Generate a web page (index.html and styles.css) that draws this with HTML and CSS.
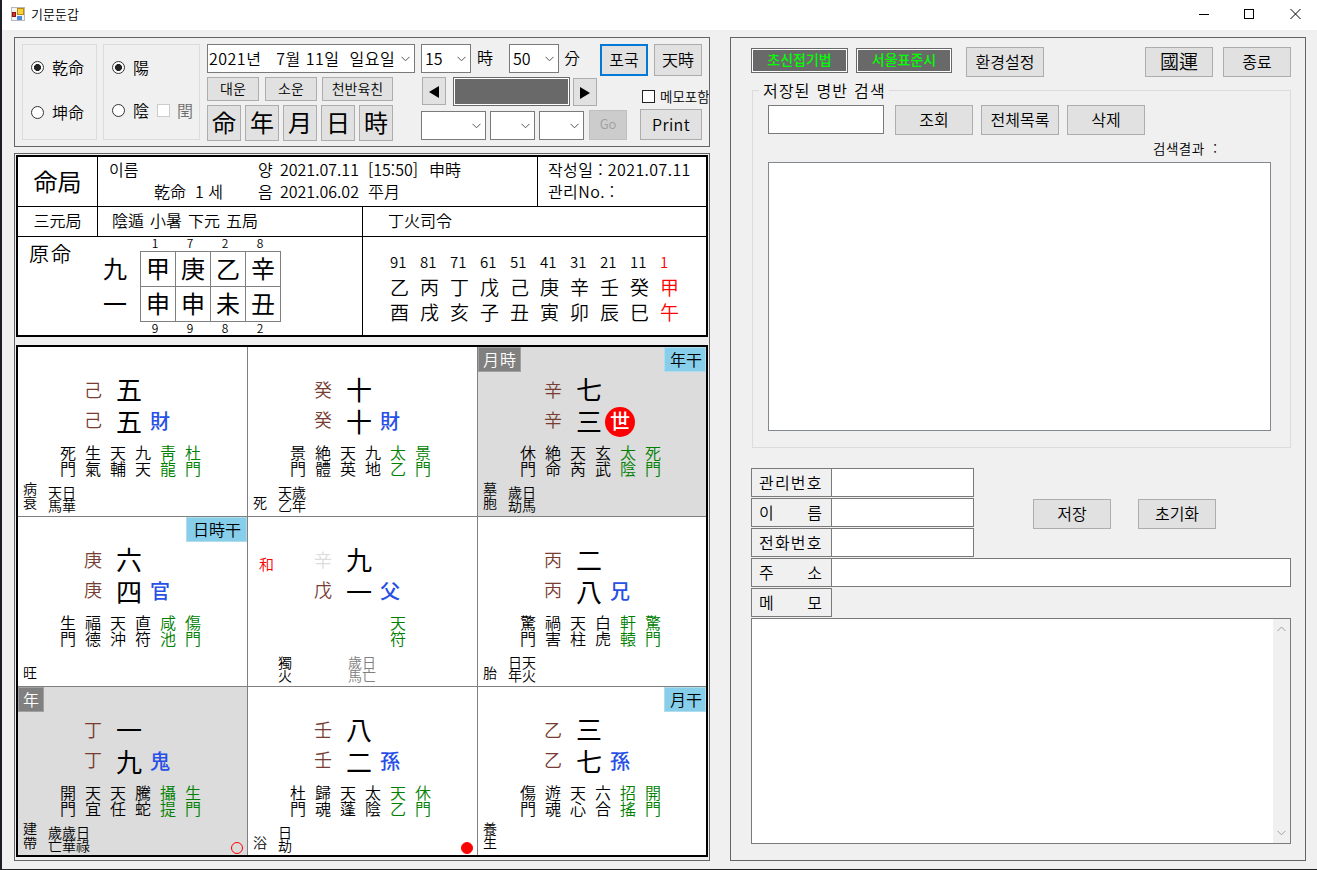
FILE: index.html
```html
<!DOCTYPE html>
<html lang="ko">
<head>
  <meta charset="UTF-8">
  <meta name="viewport" content="width=device-width, initial-scale=1.0">
  <title>기문둔갑</title>
  <link rel="stylesheet" href="styles.css">
</head>
<body>
  <div class="window">
    <!-- 제목 표시줄 -->
    <header class="titlebar">
      <svg class="app-icon" width="15" height="14" viewBox="0 0 15 14">
        <rect x="0.5" y="0.5" width="13" height="13" fill="#f4f4f4" stroke="#b8b8b8"/>
        <rect x="6.5" y="1.5" width="6" height="6" fill="#fccf3c" stroke="#b98b0b"/>
        <rect x="1.5" y="5.5" width="3" height="4" fill="#d43a2a" stroke="#8e130a"/>
        <rect x="6" y="9" width="5" height="4" fill="#4f8be0"/>
      </svg>
      <span class="app-name">기문둔갑</span>
      <svg class="win-buttons" width="103" height="12" viewBox="0 0 103 12" fill="none" stroke="#000">
        <path d="M0 6.5h10"/>
        <rect x="45.5" y="1.5" width="9" height="9"/>
        <path d="M91.5 1l10 10M101.5 1l-10 10"/>
      </svg>
    </header>

    <main>
      <div class="left">
        <!-- 입력 도구 -->
        <section class="tools">
          <div class="group gender">
            <label><i class="radio on"></i>乾命</label>
            <label><i class="radio"></i>坤命</label>
          </div>
          <div class="group calendar">
            <label><i class="radio on"></i>陽</label>
            <label><i class="radio"></i>陰 <i class="check off"></i><span class="leap">閏</span></label>
          </div>
          <div class="date-col">
            <div class="combo date"><span>2021년 &nbsp; 7월 11일 &nbsp;일요일</span><svg width="9" height="6" viewBox="0 0 9 6"><path d="M.5.8l4 4 4-4"/></svg></div>
            <div class="luck">
              <button>대운</button><button>소운</button><button class="wide">천반육친</button>
            </div>
            <div class="pillars-btn">
              <button>命</button><button>年</button><button>月</button><button>日</button><button>時</button>
            </div>
          </div>
          <div class="time-col">
            <div class="time">
              <div class="combo"><span>15</span><svg width="9" height="6" viewBox="0 0 9 6"><path d="M.5.8l4 4 4-4"/></svg></div>
              <span class="unit hour">時</span>
              <div class="combo"><span>50</span><svg width="9" height="6" viewBox="0 0 9 6"><path d="M.5.8l4 4 4-4"/></svg></div>
              <span class="unit">分</span>
            </div>
            <div class="stepper">
              <button><svg width="10" height="12" viewBox="0 0 10 12"><path d="M10 0v12L0 6z"/></svg></button>
              <div class="dark"></div>
              <button><svg width="10" height="12" viewBox="0 0 10 12"><path d="M0 0v12l10-6z"/></svg></button>
            </div>
            <div class="find">
              <div class="combo year"><svg width="9" height="6" viewBox="0 0 9 6"><path d="M.5.8l4 4 4-4"/></svg></div>
              <div class="combo"><svg width="9" height="6" viewBox="0 0 9 6"><path d="M.5.8l4 4 4-4"/></svg></div>
              <div class="combo"><svg width="9" height="6" viewBox="0 0 9 6"><path d="M.5.8l4 4 4-4"/></svg></div>
              <button disabled>Go</button>
            </div>
          </div>
          <div class="run-col">
            <div class="run"><button class="primary">포국</button><button>天時</button></div>
            <label class="memo-check"><i class="check"></i>메모포함</label>
            <button class="print">Print</button>
          </div>
        </section>

        <section class="board">
          <!-- 명국 정보 -->
          <div class="info">
            <div class="row row-name">
              <div class="name-title">命局</div>
              <div class="person">
                <span>이름</span><span>양</span><span>2021.07.11</span><span>[15:50]</span><span>申時</span>
                <span class="sex">乾命&nbsp; 1 세</span><span>음</span><span>2021.06.02</span><span>平月</span>
              </div>
              <div class="written">작성일 : 2021.07.11<br>관리No. :</div>
            </div>
            <div class="row row-guk">
              <div class="guk-title">三元局</div>
              <div class="guk"><span>陰遁</span><span>小暑</span><span>下元</span><span>五局</span></div>
              <div class="ruler">丁火司令</div>
            </div>
            <div class="row row-life">
              <div class="life">
                <div class="life-title">原命</div>
                <div class="total"><span>九</span><span>一</span></div>
                <div class="pillars">
                  <div class="nums"><span>1</span><span>7</span><span>2</span><span>8</span></div>
                  <div class="stems">
                    <span>甲</span><span>庚</span><span>乙</span><span>辛</span>
                    <span>申</span><span>申</span><span>未</span><span>丑</span>
                  </div>
                  <div class="nums"><span>9</span><span>9</span><span>8</span><span>2</span></div>
                </div>
              </div>
              <div class="decades">
                <span>91</span><span>81</span><span>71</span><span>61</span><span>51</span><span>41</span><span>31</span><span>21</span><span>11</span><span class="now">1</span>
                <span>乙</span><span>丙</span><span>丁</span><span>戊</span><span>己</span><span>庚</span><span>辛</span><span>壬</span><span>癸</span><span class="now">甲</span>
                <span>酉</span><span>戌</span><span>亥</span><span>子</span><span>丑</span><span>寅</span><span>卯</span><span>辰</span><span>巳</span><span class="now">午</span>
              </div>
            </div>
          </div>

          <!-- 구궁 -->
          <div class="palaces">
            <div class="palace">
              <div class="core"><div class="gan"><span>己</span><span>己</span></div><div class="su"><span>五</span><span>五</span></div><b class="kin">財</b></div>
              <div class="gods"><span>死門</span><span>生氣</span><span>天輔</span><span>九天</span><span class="g">靑龍</span><span class="g">杜門</span></div>
              <div class="foot"><span class="phase">病衰</span><span class="sal">天日馬華</span></div>
            </div>
            <div class="palace">
              <div class="core"><div class="gan"><span>癸</span><span>癸</span></div><div class="su"><span>十</span><span>十</span></div><b class="kin">財</b></div>
              <div class="gods"><span>景門</span><span>絶體</span><span>天英</span><span>九地</span><span class="g">太乙</span><span class="g">景門</span></div>
              <div class="foot"><span class="phase">死</span><span class="sal">天歲乙年</span></div>
            </div>
            <div class="palace shade">
              <span class="tag left-tag">月時</span><span class="tag right-tag">年干</span>
              <div class="core"><div class="gan"><span>辛</span><span>辛</span></div><div class="su"><span>七</span><span>三</span></div><b class="self">世</b></div>
              <div class="gods"><span>休門</span><span>絶命</span><span>天芮</span><span>玄武</span><span class="g">太陰</span><span class="g">死門</span></div>
              <div class="foot"><span class="phase">墓胞</span><span class="sal">歲日劫馬</span></div>
            </div>
            <div class="palace">
              <span class="tag right-tag three-tag">日時干</span>
              <div class="core"><div class="gan"><span>庚</span><span>庚</span></div><div class="su"><span>六</span><span>四</span></div><b class="kin">官</b></div>
              <div class="gods"><span>生門</span><span>福德</span><span>天沖</span><span>直符</span><span class="g">咸池</span><span class="g">傷門</span></div>
              <div class="foot"><span class="phase">旺</span></div>
            </div>
            <div class="palace center">
              <span class="harmony">和</span>
              <div class="core"><div class="gan"><span class="faint">辛</span><span>戊</span></div><div class="su"><span>九</span><span>一</span></div><b class="kin">父</b></div>
              <div class="gods"><span></span><span></span><span></span><span></span><span class="g">天符</span><span></span></div>
              <div class="foot"><span class="phase"></span><span class="sal one">獨火</span><span class="sal gray">歲日馬亡</span></div>
            </div>
            <div class="palace">
              <div class="core"><div class="gan"><span>丙</span><span>丙</span></div><div class="su"><span>二</span><span>八</span></div><b class="kin">兄</b></div>
              <div class="gods"><span>驚門</span><span>禍害</span><span>天柱</span><span>白虎</span><span class="g">軒轅</span><span class="g">驚門</span></div>
              <div class="foot"><span class="phase">胎</span><span class="sal">日天年火</span></div>
            </div>
            <div class="palace shade">
              <span class="tag left-tag">年</span>
              <div class="core"><div class="gan"><span>丁</span><span>丁</span></div><div class="su"><span>一</span><span>九</span></div><b class="kin">鬼</b></div>
              <div class="gods"><span>開門</span><span>天宜</span><span>天任</span><span>騰蛇</span><span class="g">攝提</span><span class="g">生門</span></div>
              <div class="foot"><span class="phase">建帶</span><span class="sal three">歲歲日亡華祿</span></div>
              <i class="dot hollow"></i>
            </div>
            <div class="palace">
              <div class="core"><div class="gan"><span>壬</span><span>壬</span></div><div class="su"><span>八</span><span>二</span></div><b class="kin">孫</b></div>
              <div class="gods"><span>杜門</span><span>歸魂</span><span>天蓬</span><span>太陰</span><span class="g">天乙</span><span class="g">休門</span></div>
              <div class="foot"><span class="phase">浴</span><span class="sal one">日劫</span></div>
              <i class="dot"></i>
            </div>
            <div class="palace">
              <span class="tag right-tag">月干</span>
              <div class="core"><div class="gan"><span>乙</span><span>乙</span></div><div class="su"><span>三</span><span>七</span></div><b class="kin">孫</b></div>
              <div class="gods"><span>傷門</span><span>遊魂</span><span>天心</span><span>六合</span><span class="g">招搖</span><span class="g">開門</span></div>
              <div class="foot"><span class="phase">養生</span></div>
            </div>
          </div>
        </section>
      </div>

      <!-- 저장 / 검색 -->
      <section class="right">
        <div class="top">
          <div class="dark mode">초신접기법</div>
          <div class="dark mode std">서울표준시</div>
          <button class="setup">환경설정</button>
          <button class="nation">國運</button>
          <button class="quit">종료</button>
        </div>
        <fieldset>
          <legend>저장된 명반 검색</legend>
          <div class="search">
            <input type="text">
            <button>조회</button><button>전체목록</button><button>삭제</button>
          </div>
          <div class="result">검색결과 &nbsp;:</div>
          <div class="list"></div>
        </fieldset>
        <div class="form-top">
          <div class="fields">
            <div class="field"><label class="full">관리번호</label><input type="text"></div>
            <div class="field"><label><span>이</span><span>름</span></label><input type="text"></div>
            <div class="field"><label class="full">전화번호</label><input type="text"></div>
          </div>
          <div class="save"><button>저장</button><button>초기화</button></div>
        </div>
        <div class="field address"><label><span>주</span><span>소</span></label><input type="text"></div>
        <div class="field"><label><span>메</span><span>모</span></label></div>
        <div class="memo">
          <div class="scroll">
            <svg width="9" height="6" viewBox="0 0 9 6"><path d="M.5 5l4-4 4 4"/></svg>
            <svg width="9" height="6" viewBox="0 0 9 6"><path d="M.5.8l4 4 4-4"/></svg>
          </div>
        </div>
      </section>
    </main>
  </div>
</body>
</html>
```
FILE: styles.css
```css
* {
  box-sizing: border-box;
}
body {
  margin: 0;
  font-family: "Noto Sans CJK KR", sans-serif;
  font-size: 16px;
  font-weight: 350;
  color: #000;
  background-color: #f0f0f0;
}
i, b {
  font-style: normal;
}
.window {
  width: 1317px;
  height: 870px;
  border-left: 2px solid #1c1f26;
  border-bottom: 1px solid #222;
  overflow: hidden;
}
.titlebar {
  height: 30px;
  display: flex;
  align-items: center;
  padding: 0 15px 2px 9px;
  background-color: #fff;
}
.app-name {
  margin-left: 5px;
  font-size: 13px;
  line-height: 20px;
}
.win-buttons {
  margin-left: auto;
}
main {
  display: flex;
  gap: 20px;
  padding: 7px 0 0 12px;
}
button {
  display: flex;
  align-items: center;
  justify-content: center;
  padding: 0 0 2px;
  border: 1px solid #adadad;
  background-color: #e1e1e1;
  color: #000;
  font-family: inherit;
  font-size: 16px;
  font-weight: inherit;
  line-height: 20px;
  white-space: nowrap;
}
button:disabled {
  border-color: #bfbfbf;
  background-color: #ccc;
  color: #a0a0a0;
}
input {
  height: 29px;
  padding: 0 4px;
  border: 1px solid #7a7a7a;
  background-color: #fff;
}

/* 입력 도구 */
.left {
  width: 696px;
}
.tools {
  height: 110px;
  display: flex;
  padding: 6px 0 0 7px;
  border: 1px solid #646464;
}
.group {
  height: 96px;
  border: 1px solid #dcdcdc;
  padding-left: 8px;
}
.group label {
  display: flex;
  align-items: center;
  height: 20px;
}
.gender {
  width: 75px;
}
.gender label:first-child, .calendar label:first-child {
  margin-top: 12px;
}
.gender label + label {
  margin-top: 25px;
}
.calendar {
  width: 97px;
  margin-left: 6px;
}
.calendar label + label {
  margin-top: 23px;
}
.radio {
  flex: none;
  width: 13px;
  height: 13px;
  margin-right: 8px;
  border: 1px solid #333;
  border-radius: 50%;
  background-color: #fff;
}
.radio.on {
  background-image: radial-gradient(circle, #222 3.2px, transparent 3.8px);
}
.check {
  flex: none;
  width: 13px;
  height: 13px;
  border: 1px solid #222;
  background-color: #fff;
}
.check.off {
  margin-left: 8px;
  border-color: #ccc;
}
.leap {
  margin-left: 7px;
  color: #6d6d6d;
}
.date-col {
  width: 208px;
  margin-left: 7px;
}
.combo {
  height: 29px;
  width: 50px;
  display: flex;
  align-items: center;
  padding: 0 4px 0 3px;
  border: 1px solid #7a7a7a;
  background-color: #fff;
  line-height: 20px;
  white-space: nowrap;
}
.combo span {
  padding-bottom: 2px;
}
.combo svg {
  flex: none;
  margin-left: auto;
}
.combo path, .scroll path {
  fill: none;
  stroke: #555;
}
.combo.date {
  width: 208px;
  padding-left: 1px;
  letter-spacing: 0.5px;
}
.luck {
  display: flex;
  gap: 6px;
  margin-top: 4px;
}
.luck button {
  width: 52px;
  height: 24px;
  font-size: 14px;
}
.luck .wide {
  width: 71px;
  margin-left: -1px;
}
.pillars-btn {
  display: flex;
  gap: 4px;
  margin-top: 4px;
}
.pillars-btn button {
  width: 34px;
  height: 36px;
  font-size: 24px;
  font-weight: 400;
}
.time-col {
  width: 206px;
  margin-left: 6px;
}
.time {
  display: flex;
  height: 29px;
}
.unit {
  line-height: 26px;
  margin-left: 5px;
}
.unit.hour {
  width: 32px;
  margin-left: 6px;
}
.stepper {
  display: flex;
  align-items: flex-start;
  margin: 4px 0 0 1px;
}
.stepper button {
  width: 24px;
  height: 28px;
  padding: 2px 0 0;
}
.stepper button:last-child {
  margin: 1px 0 0 3px;
}
.stepper .dark {
  width: 117px;
  height: 29px;
  margin-left: 7px;
}
.dark {
  border: 1px solid #696969;
  background-color: #696969;
  box-shadow: inset 0 0 0 1px #fff;
}
.find {
  display: flex;
  gap: 4px;
  margin-top: 5px;
}
.find .combo {
  width: 45px;
}
.find .combo.year {
  width: 65px;
}
.find button {
  width: 38px;
  height: 30px;
  margin: -1px 0 0 1px;
  font-size: 13px;
}
.run-col {
  flex: 1;
  display: flex;
  flex-direction: column;
  align-items: flex-end;
  min-width: 0;
  margin-left: -27px;
  overflow: hidden;
}
.run {
  display: flex;
  gap: 6px;
  margin-right: 7px;
}
.run button {
  width: 48px;
  height: 32px;
}
.run .primary {
  border: 2px solid #0078d7;
}
.memo-check {
  display: flex;
  align-items: center;
  gap: 5px;
  width: 67px;
  height: 20px;
  margin-top: 10px;
  font-size: 13.5px;
  white-space: nowrap;
}
.print {
  width: 62px;
  height: 31px;
  margin: 3px 7px 0 0;
  letter-spacing: 0.4px;
}

/* 명국 정보 */
.board {
  height: 708px;
  margin-top: 6px;
  padding: 1px;
  border: 1px solid #646464;
}
.info {
  width: 692px;
  height: 182px;
  border: 2px solid #000;
  background-color: #fff;
}
.row {
  display: flex;
}
.row-name {
  height: 50px;
  border-bottom: 1px solid #000;
}
.name-title, .guk-title {
  width: 80px;
  border-right: 1px solid #000;
  text-align: center;
}
.name-title {
  font-size: 24px;
  font-weight: 400;
  line-height: 48px;
}
.person {
  width: 439px;
  display: grid;
  grid-template-columns: 149px 22px 88px 61px 60px;
  grid-template-rows: 22px 22px;
  padding: 1px 0 0 11px;
  line-height: 22px;
}
.sex {
  padding-left: 45px;
}
.written {
  flex: 1;
  padding: 1px 0 0 10px;
  border-left: 1px solid #000;
  line-height: 22px;
  letter-spacing: 0.4px;
  white-space: nowrap;
}
.row-guk {
  height: 30px;
  border-bottom: 1px solid #000;
  line-height: 27px;
}
.guk {
  width: 264px;
  display: flex;
  gap: 6px;
  padding-left: 14px;
}
.ruler {
  flex: 1;
  padding-left: 25px;
  border-left: 1px solid #000;
}
.row-life {
  height: 98px;
}
.life {
  width: 344px;
  display: flex;
  padding-left: 11px;
}
.life-title {
  width: 74px;
  font-size: 20px;
  line-height: 34px;
  letter-spacing: 2px;
}
.total {
  width: 37px;
  padding-top: 13px;
  font-size: 24px;
  font-weight: 400;
  line-height: 35px;
}
.total span {
  display: block;
}
.pillars .nums {
  display: flex;
  height: 14px;
  font-size: 12px;
  line-height: 12px;
}
.nums span {
  width: 35px;
  padding-right: 5px;
  text-align: center;
}
.stems {
  display: grid;
  grid-template-columns: repeat(4, 35px);
  grid-auto-rows: 35px;
  border: 1px solid #808080;
  border-width: 1px 0 0 1px;
  font-size: 24px;
  font-weight: 400;
  line-height: 32px;
  text-align: center;
}
.stems span {
  border: 1px solid #808080;
  border-width: 0 1px 1px 0;
}
.decades {
  flex: 1;
  display: grid;
  grid-template-columns: repeat(10, 30px);
  grid-auto-rows: 25px;
  align-content: start;
  padding: 12px 0 0 27px;
  border-left: 1px solid #000;
  font-size: 19px;
  line-height: 25px;
}
.decades span:nth-child(-n+10) {
  font-size: 15px;
}
.decades .now {
  color: #f00;
}

/* 구궁 */
.palaces {
  width: 692px;
  height: 512px;
  margin-top: 8px;
  display: grid;
  grid-template-columns: 230px 230px 228px;
  grid-template-rows: 170px 170px 168px;
  border: 2px solid #000;
  background-color: #fff;
}
.palace {
  position: relative;
  display: flex;
  flex-direction: column;
  border: 0 solid #808080;
  border-width: 0 1px 1px 0;
  padding-top: 26px;
}
.palace:nth-child(3n) {
  border-right: 0;
}
.palace:nth-child(n+7) {
  border-bottom: 0;
}
.shade {
  background-color: #dcdcdc;
}
.core {
  display: flex;
  height: 64px;
  padding-left: 66px;
}
.gan {
  width: 32px;
  padding-top: 1px;
  font-size: 18px;
  line-height: 30px;
  color: #783c32;
}
.su {
  width: 34px;
  font-size: 26px;
  font-weight: 400;
  line-height: 32px;
}
.gan span, .su span {
  display: block;
}
.gan .faint {
  color: #dcdcdc;
}
.kin {
  align-self: flex-end;
  font-size: 20px;
  font-weight: 500;
  line-height: 32px;
  color: #284fe6;
}
.self {
  align-self: flex-end;
  width: 30px;
  height: 30px;
  margin: 0 0 0 -5px;
  border-radius: 50%;
  background-color: #f00;
  color: #fff;
  font-size: 20px;
  font-weight: 500;
  line-height: 28px;
  text-align: center;
}
.gods {
  display: flex;
  gap: 9px;
  height: 32px;
  margin-top: 7px;
  padding-left: 42px;
  font-size: 16px;
  line-height: 16px;
}
.gods span {
  width: 16px;
}
.gods .g {
  color: #008000;
}
.foot {
  flex: none;
  display: flex;
  align-items: flex-end;
  height: 36px;
  padding-left: 5px;
  font-size: 14px;
}
.phase {
  width: 14px;
  margin: 0 11px 3px 0;
  line-height: 14px;
}
.sal {
  width: 28px;
  line-height: 13px;
}
.sal.one {
  width: 14px;
}
.sal.three {
  width: 42px;
}
.sal.gray {
  margin-left: 56px;
  color: #808080;
}
.tag {
  position: absolute;
  top: 0;
  height: 25px;
  font-size: 16px;
  line-height: 22px;
}
.left-tag {
  left: 0;
  padding: 0 3px 0 4px;
  border: 1px solid #a0a0a0;
  background-color: #808080;
  color: #fff;
  letter-spacing: 1px;
}
.right-tag {
  right: 0;
  padding: 0 3px 0 5px;
  border: 1px solid #b0dcee;
  background-color: #87ceeb;
}
.three-tag {
  padding: 0 5px 0 6px;
}
.harmony {
  position: absolute;
  left: 11px;
  top: 37px;
  font-size: 15px;
  line-height: 20px;
  color: #f00;
}
.dot {
  position: absolute;
  right: 4px;
  bottom: 1px;
  width: 12px;
  height: 12px;
  border: 1px solid #f00;
  border-radius: 50%;
  background-color: #f00;
}
.dot.hollow {
  background-color: transparent;
}

/* 저장 / 검색 */
.right {
  width: 576px;
  height: 824px;
  padding: 9px 14px 0 20px;
  border: 1px solid #646464;
}
.top {
  display: flex;
  height: 30px;
}
.mode {
  width: 97px;
  height: 25px;
  margin-top: 1px;
  font-size: 14px;
  font-weight: 500;
  line-height: 20px;
  text-align: center;
  color: #0f0;
}
.std {
  width: 96px;
  margin-left: 8px;
}
.setup {
  width: 78px;
  margin-left: 14px;
}
.nation {
  width: 68px;
  margin-left: auto;
  font-size: 19px;
}
.quit {
  width: 68px;
  margin-left: 10px;
}
fieldset {
  height: 368px;
  margin: 3px 0 0 1px;
  padding: 5px 19px 0 15px;
  border: 1px solid #dcdcdc;
}
legend {
  margin-left: -9px;
  padding: 0 3px 0 4px;
  line-height: 20px;
  letter-spacing: 1.2px;
  white-space: nowrap;
}
.search {
  display: flex;
}
.search input {
  width: 116px;
  margin-right: 3px;
}
.search button {
  width: 78px;
  height: 30px;
  margin-left: 8px;
}
.result {
  height: 27px;
  padding-left: 385px;
  font-size: 13.5px;
  line-height: 26px;
  letter-spacing: 0.5px;
}
.list {
  height: 269px;
  border: 1px solid #828790;
  background-color: #fff;
}
.form-top {
  display: flex;
  margin-top: 20px;
}
.field {
  display: flex;
  height: 30px;
}
.field label {
  display: flex;
  justify-content: space-between;
  width: 81px;
  height: 29px;
  padding: 0 9px 0 7px;
  border: 1px solid #7a7a7a;
  line-height: 26px;
  white-space: nowrap;
}
.field .full {
  letter-spacing: 1.2px;
}
.field input {
  width: 143px;
  margin-left: -1px;
}
.field.address input {
  width: 460px;
}
.save {
  display: flex;
  gap: 27px;
  margin: 31px 0 0 59px;
}
.save button {
  width: 78px;
  height: 30px;
}
.memo {
  display: flex;
  justify-content: flex-end;
  height: 226px;
  border: 1px solid #7a7a7a;
  background-color: #fff;
}
.scroll {
  width: 17px;
  display: flex;
  flex-direction: column;
  justify-content: space-between;
  align-items: center;
  padding: 7px 0;
  background-color: #f0f0f0;
}
.scroll path {
  stroke: #a0a0a0;
}
```
